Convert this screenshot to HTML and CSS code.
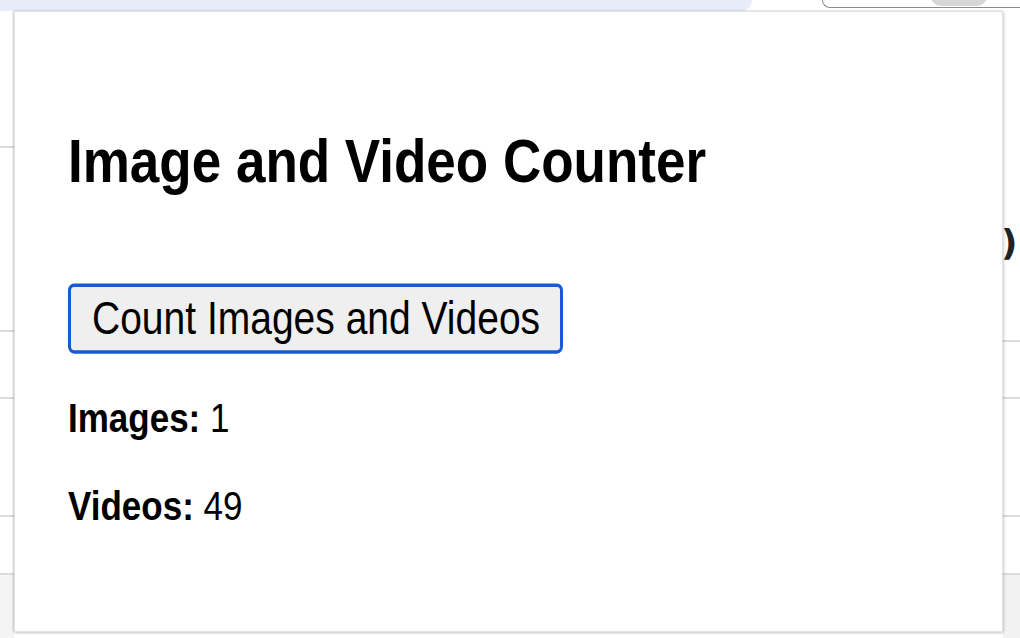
FILE: index.html
```html
<!DOCTYPE html>
<html lang="en">
<head>
<meta charset="utf-8">
<title>Image and Video Counter</title>
<link rel="stylesheet" href="styles.css">
</head>
<body>
<div class="topbar">
  <div class="tabstrip"></div>
  <div class="pill"><span class="blob"></span></div>
</div>
<div class="page">
  <div class="side side-left">
    <div class="row" style="height:137px"></div>
    <div class="row" style="height:184px"></div>
    <div class="row" style="height:67px"></div>
    <div class="row" style="height:118px"></div>
    <div class="row" style="height:58px"></div>
    <div class="row-last"></div>
  </div>
  <div class="middle"></div>
  <div class="side side-right">
    <div class="row-plain paren-row"><span class="paren">)</span></div>
    <div class="row" style="height:331px"></div>
    <div class="row" style="height:57px"></div>
    <div class="row" style="height:118px"></div>
    <div class="row" style="height:58px"></div>
    <div class="row-last"></div>
  </div>
</div>
<div class="popup">
  <div class="content">
    <h1 class="title">Image and Video Counter</h1>
    <button class="count-btn" type="button">Count Images and Videos</button>
    <p class="stat"><strong>Images:</strong> 1</p>
    <p class="stat stat-videos"><strong>Videos:</strong> 49</p>
  </div>
</div>
</body>
</html>
```

FILE: styles.css
```css
html, body {
  margin: 0;
  padding: 0;
}

body {
  width: 1020px;
  height: 638px;
  overflow: hidden;
  background: #ffffff;
  font-family: "Liberation Sans", Arial, sans-serif;
  color: #000;
  position: relative;
}

.topbar {
  height: 11px;
  display: flex;
  background: #ffffff;
}

.tabstrip {
  flex: 0 0 752px;
  background: #e7edf8;
  border-bottom-right-radius: 12px;
}

.pill {
  flex: 1;
  margin-left: 70px;
  height: 7px;
  border: 1.5px solid #8c8c8c;
  border-top: none;
  border-right: none;
  border-bottom-left-radius: 14px;
  position: relative;
}

.blob {
  position: absolute;
  left: 108px;
  top: -4px;
  width: 56px;
  height: 10px;
  border-radius: 0 0 28px 28px;
  background: #d6d6d6;
}

.page {
  height: 627px;
  display: grid;
  grid-template-columns: 14px 1fr 17px;
}

.side {
  display: flex;
  flex-direction: column;
}

.row {
  border-bottom: 2px solid #dcdcdc;
  box-sizing: border-box;
  flex: none;
}

.row-plain {
  flex: none;
}

.row-last {
  flex: 1;
  background: #f2f2f2;
}

.side-left .row-last {
  background: #f4f4f4;
}

.paren-row {
  height: 0;
  position: relative;
}

.paren {
  position: absolute;
  left: -2px;
  top: 214px;
  font-family: "DejaVu Sans", sans-serif;
  font-size: 36px;
  line-height: 36px;
  font-weight: bold;
  color: #222;
}

.popup {
  position: absolute;
  left: 14px;
  top: 11px;
  width: 989px;
  height: 621px;
  box-sizing: border-box;
  background: #ffffff;
  border: 1px solid #e2e2e2;
  box-shadow: -1px 0 2px rgba(0, 0, 0, 0.18), 1px 1px 3px rgba(0, 0, 0, 0.18);
  overflow: hidden;
}

.content {
  transform: scaleY(1.17);
  transform-origin: 0 0;
  padding: 97px 0 0 53px;
  display: flex;
  flex-direction: column;
  align-items: flex-start;
}

.title {
  margin: 0;
  font-size: 53px;
  line-height: 60px;
  font-weight: bold;
  white-space: nowrap;
}

.count-btn {
  margin-top: 75px;
  height: 60px;
  box-sizing: border-box;
  padding: 4px 20px 4px 21px;
  border: 3px solid #175bd2;
  border-radius: 6px;
  background: #efefef;
  font-family: "Liberation Sans", Arial, sans-serif;
  font-size: 39px;
  line-height: 46px;
  color: #000;
  white-space: nowrap;
}

.stat {
  margin: 35px 0 0 0;
  font-size: 35px;
  line-height: 40px;
  white-space: nowrap;
}

.stat strong {
  font-weight: bold;
}
```
